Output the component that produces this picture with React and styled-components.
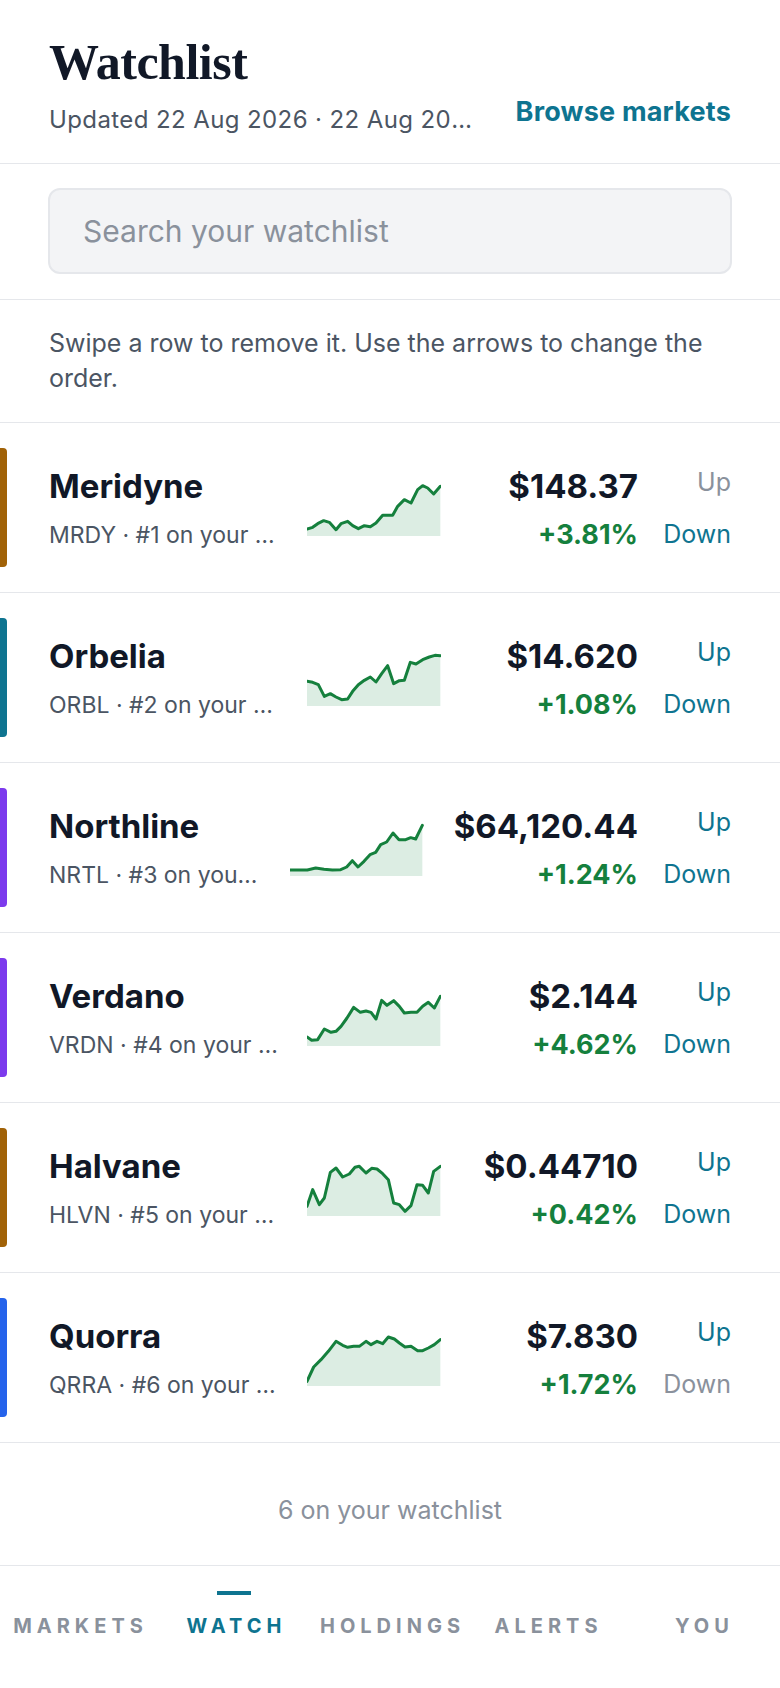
import React from "react";
import styled, { createGlobalStyle } from "styled-components";

const GlobalStyle = createGlobalStyle`
  * { box-sizing: border-box; }
  body {
    margin: 0;
    background: #ffffff;
    font-family: Inter, "Noto Sans", "Liberation Sans", sans-serif;
    color: #111827;
  }
`;

const STOCKS = [
    {
        name: "Meridyne", ticker: "MRDY", rank: 1, price: "$148.37", change: "+3.81%", color: "#a16207",
        upDisabled: true, downDisabled: false,
        points: [[28,168],[45,163],[60,152],[78,143],[95,148],[115,170],[130,152],[150,145],[165,158],[182,167],[200,158],[218,161],[235,150],[255,127],[285,127],[300,100],[320,80],[340,90],[360,50],[375,38],[390,45],[408,63],[428,40]],
    },
    {
        name: "Orbelia", ticker: "ORBL", rank: 2, price: "$14.620", change: "+1.08%", color: "#0e7490",
        points: [[28,115],[45,118],[62,125],[80,160],[98,152],[115,162],[132,170],[150,168],[165,145],[182,125],[200,112],[218,102],[235,117],[252,92],[270,68],[288,122],[305,113],[320,112],[338,58],[355,63],[375,50],[395,42],[412,37],[428,38]],
    },
    {
        name: "Northline", ticker: "NRTL", rank: 3, price: "$64,120.44", change: "+1.24%", color: "#7c3aed",
        points: [[28,171],[60,171],[80,171],[105,165],[130,169],[155,171],[180,170],[198,162],[215,143],[232,162],[250,145],[268,125],[285,118],[300,95],[318,87],[337,60],[355,80],[375,80],[390,74],[405,78],[425,37]],
    },
    {
        name: "Verdano", ticker: "VRDN", rank: 4, price: "$2.144", change: "+4.62%", color: "#7c3aed",
        points: [[28,162],[42,172],[60,170],[80,138],[100,148],[115,145],[130,130],[148,105],[168,73],[188,88],[205,84],[220,88],[235,108],[252,52],[268,67],[288,53],[305,70],[320,90],[340,88],[358,88],[375,70],[392,58],[410,75],[428,40]],
    },
    {
        name: "Halvane", ticker: "HLVN", rank: 5, price: "$0.44710", change: "+0.42%", color: "#a16207",
        points: [[28,160],[45,110],[65,155],[80,135],[98,58],[115,45],[135,72],[155,63],[172,43],[185,40],[205,60],[222,46],[238,48],[255,62],[272,80],[288,150],[305,155],[322,175],[340,158],[358,95],[375,97],[392,120],[408,55],[428,40]],
    },
    {
        name: "Quorra", ticker: "QRRA", rank: 6, price: "$7.830", change: "+1.72%", color: "#2563eb",
        upDisabled: false, downDisabled: true,
        points: [[28,175],[48,132],[70,110],[92,85],[115,55],[135,67],[150,73],[168,70],[185,70],[205,55],[220,65],[238,55],[255,62],[272,42],[290,48],[305,60],[322,72],[340,70],[360,83],[375,83],[392,75],[410,65],[428,50]],
    },
];

const TABS = ["MARKETS", "WATCH", "HOLDINGS", "ALERTS", "YOU"];

const Page = styled.div`
  min-height: 100vh;
  display: flex;
  flex-direction: column;
`;

const Header = styled.header`
  display: flex;
  align-items: flex-end;
  justify-content: space-between;
  gap: 32px;
  padding: 34px 49px 27px;
  border-bottom: 1px solid #e5e7eb;
`;

const TitleBlock = styled.div`
  min-width: 0;
  flex: 1;
`;

const Title = styled.h1`
  margin: 0;
  font-family: "Liberation Serif", "Times New Roman", serif;
  font-weight: 700;
  font-size: 50px;
  line-height: 56px;
  letter-spacing: -0.5px;
  color: #111827;
`;

const Subtitle = styled.div`
  margin-top: 14px;
  font-size: 24px;
  line-height: 32px;
  letter-spacing: 0.4px;
  color: #4b5563;
  white-space: nowrap;
  overflow: hidden;
  text-overflow: ellipsis;
`;

const BrowseLink = styled.a`
  flex-shrink: 0;
  font-size: 27px;
  line-height: 32px;
  font-weight: 700;
  letter-spacing: 0.2px;
  color: #0e7490;
  text-decoration: none;
  padding-bottom: 8px;
`;

const SearchSection = styled.div`
  padding: 24px 48px 25px;
  border-bottom: 1px solid #e5e7eb;
`;

const SearchInput = styled.input`
  display: block;
  width: 100%;
  height: 86px;
  padding: 0 33px;
  border: 2px solid #e5e7eb;
  border-radius: 12px;
  background: #f3f4f6;
  font-family: inherit;
  font-size: 30px;
  color: #111827;
  outline: none;
  &::placeholder { color: #8a919c; }
`;

const Hint = styled.p`
  margin: 0;
  padding: 26px 49px 26px;
  font-size: 25px;
  line-height: 35px;
  color: #4b5563;
  border-bottom: 1px solid #e5e7eb;
`;

const List = styled.ul`
  list-style: none;
  margin: 0;
  padding: 0;
`;

const Row = styled.li`
  height: 170px;
  display: flex;
  align-items: center;
  padding-right: 49px;
  border-bottom: 1px solid #e5e7eb;
`;

const ColorBar = styled.span`
  flex-shrink: 0;
  width: 7px;
  height: 119px;
  margin-right: 42px;
  border-radius: 0 4px 4px 0;
  background: ${p => p.$color};
`;

const NameCol = styled.div`
  flex: 1;
  min-width: 0;
  display: flex;
  flex-direction: column;
  gap: 15px;
  margin-right: 26px;
`;

const Name = styled.div`
  font-size: 33px;
  line-height: 40px;
  font-weight: 700;
  color: #111827;
  white-space: nowrap;
  overflow: hidden;
  text-overflow: ellipsis;
`;

const Sub = styled.div`
  font-size: 23px;
  line-height: 28px;
  color: #4b5563;
  white-space: nowrap;
  overflow: hidden;
  text-overflow: ellipsis;
`;

const Spark = styled.svg`
  flex-shrink: 0;
  display: block;
  width: 134px;
  height: 57px;
  margin-right: 30px;
`;

const PriceCol = styled.div`
  flex-shrink: 0;
  min-width: 167px;
  display: flex;
  flex-direction: column;
  align-items: flex-end;
  gap: 15px;
  margin-right: 25px;
`;

const Price = styled.div`
  font-size: 33px;
  line-height: 40px;
  font-weight: 700;
  color: #111827;
  white-space: nowrap;
`;

const Change = styled.div`
  font-size: 27px;
  line-height: 28px;
  font-weight: 700;
  color: #15803d;
`;

const Actions = styled.div`
  width: 68px;
  display: flex;
  flex-direction: column;
  align-items: flex-end;
  gap: 24px;
`;

const MoveButton = styled.button`
  padding: 0;
  border: none;
  background: none;
  font-family: inherit;
  font-size: 25px;
  line-height: 28px;
  color: ${p => (p.disabled ? "#8a919c" : "#0e7490")};
  cursor: pointer;
`;

const Footer = styled.div`
  padding: 52px 0 40px;
  text-align: center;
  font-size: 25px;
  line-height: 30px;
  color: #8a919c;
  border-bottom: 1px solid #e5e7eb;
`;

const TabBar = styled.nav`
  flex: 1;
  display: grid;
  grid-template-columns: repeat(5, 1fr);
  align-items: start;
  min-height: 123px;
`;

const Tab = styled.a`
  display: flex;
  flex-direction: column;
  align-items: center;
  padding-top: 25px;
  text-decoration: none;
  color: ${p => (p.$active ? "#0e7490" : "#8a919c")};
`;

const Indicator = styled.span`
  width: 34px;
  height: 4px;
  background: ${p => (p.$active ? "#0e7490" : "transparent")};
`;

const TabLabel = styled.span`
  margin-top: 20px;
  font-size: 20px;
  line-height: 22px;
  font-weight: 700;
  letter-spacing: 5px;
  margin-right: -5px;
`;

const Sparkline = ({points}) => {
    const line = points.map(([x, y]) => `${x},${y}`).join(" ");
    const first = points[0];
    const last = points[points.length - 1];
    const area = `${first[0]},190 ${line} ${last[0]},190`;
    return (
        <Spark viewBox="28 18 402 171" preserveAspectRatio="none">
            <polygon points={area} fill="#dcede3"/>
            <polyline points={line} fill="none" stroke="#15803d" strokeWidth="9"
                      strokeLinejoin="round" strokeLinecap="round"/>
        </Spark>
    );
};

const StockRow = ({stock}) => (
    <Row>
        <ColorBar $color={stock.color}/>
        <NameCol>
            <Name>{stock.name}</Name>
            <Sub>{stock.ticker} · #{stock.rank} on your watchlist</Sub>
        </NameCol>
        <Sparkline points={stock.points}/>
        <PriceCol>
            <Price>{stock.price}</Price>
            <Change>{stock.change}</Change>
        </PriceCol>
        <Actions>
            <MoveButton disabled={!!stock.upDisabled}>Up</MoveButton>
            <MoveButton disabled={!!stock.downDisabled}>Down</MoveButton>
        </Actions>
    </Row>
);

const App = () => {
    return (
        <Page>
            <GlobalStyle/>
            <Header>
                <TitleBlock>
                    <Title>Watchlist</Title>
                    <Subtitle>Updated 22 Aug 2026 · 22 Aug 2026, 09:41</Subtitle>
                </TitleBlock>
                <BrowseLink href="#">Browse markets</BrowseLink>
            </Header>
            <SearchSection>
                <SearchInput type="text" placeholder="Search your watchlist"/>
            </SearchSection>
            <Hint>Swipe a row to remove it. Use the arrows to change the order.</Hint>
            <List>
                {STOCKS.map(stock => <StockRow key={stock.ticker} stock={stock}/>)}
            </List>
            <Footer>6 on your watchlist</Footer>
            <TabBar>
                {TABS.map(tab => (
                    <Tab key={tab} href="#" $active={tab === "WATCH"}>
                        <Indicator $active={tab === "WATCH"}/>
                        <TabLabel>{tab}</TabLabel>
                    </Tab>
                ))}
            </TabBar>
        </Page>
    );
};

export default App;
